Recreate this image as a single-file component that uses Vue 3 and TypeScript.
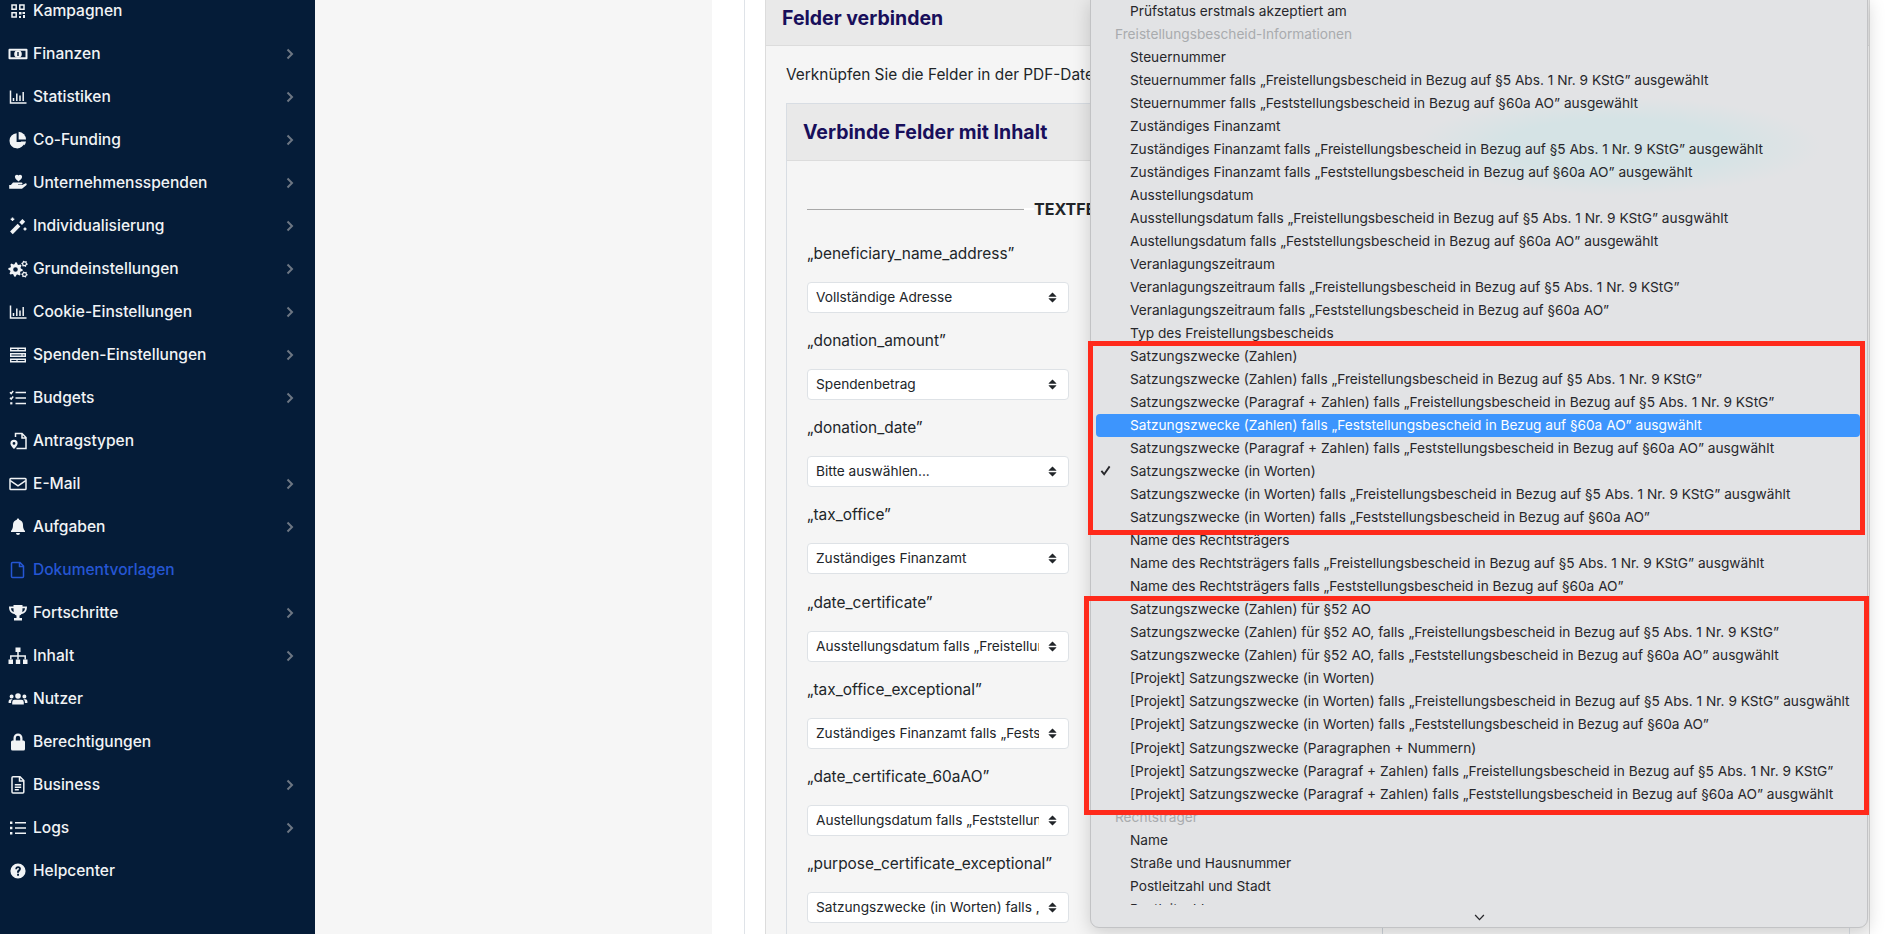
<script setup lang="ts">
type Part = [string, 'f' | 's' | 'd' | 'w'];
interface NavItem { label: string; icon: Part[]; chevron: boolean; active?: boolean }

function gear(cx: number, cy: number, r: number, teeth: number, hole: number): string {
  const pts: string[] = [];
  const n = teeth * 4;
  for (let i = 0; i < n; i++) {
    const a = (i / n) * Math.PI * 2;
    const rad = i % 4 < 2 ? r : r * 0.76;
    pts.push(`${(cx + rad * Math.cos(a)).toFixed(2)} ${(cy + rad * Math.sin(a)).toFixed(2)}`);
  }
  const h = `M${cx - hole} ${cy}a${hole} ${hole} 0 1 0 ${hole * 2} 0a${hole} ${hole} 0 1 0 ${-hole * 2} 0z`;
  return `M${pts.join('L')}z${h}`;
}

const chart: Part[] = [
  ['M2.5 3.5V16H18.5', 's'],
  ['M5.5 14v-3M8.8 14V6.5M12 14V8.5M15.2 14V5', 's'],
];

const nav: NavItem[] = [
  { label: 'Kampagnen', chevron: false, icon: [
    ['M4 4h4.2v4.2H4zM11.8 4H16v4.2h-4.2zM4 11.8h4.2V16H4z', 's'],
    ['M11 11h2.5v2.5H11zM14.5 11H17v2h-2.5zM11 15h2v2h-2zM15 14h2v3h-2z', 'f'],
  ] },
  { label: 'Finanzen', chevron: true, icon: [
    ['M.5 5.800a1 1 0 0 1 1-1h17a1 1 0 0 1 1 1v8.400a1 1 0 0 1-1 1h-17a1 1 0 0 1-1-1zM2.500 6.800v6.400h15V6.800z', 'f'],
    ['M10 6.200a3.800 3.800 0 1 0 0 7.600 3.800 3.800 0 0 0 0-7.600zM9.300 8h1.400v4H9.300z', 'f'],
  ] },
  { label: 'Statistiken', chevron: true, icon: chart },
  { label: 'Co-Funding', chevron: true, icon: [
    ['M8.600 3.200A7.600 7.600 0 1 0 16.600 12H8.600z', 'f'],
    ['M10.600 1.800A7.600 7.600 0 0 1 18 9.600h-7.400z', 'f'],
    ['M18 11.400h-5.400l3.600 3.800a7.500 7.500 0 0 0 1.800-3.800z', 'f'],
  ] },
  { label: 'Unternehmensspenden', chevron: true, icon: [
    ['M10.500 2.400c1-1.300 3.600-.9 3.600 1.400 0 1.900-2.400 3.700-3.600 4.600C9.300 7.500 6.900 5.700 6.900 3.800c0-2.300 2.600-2.700 3.600-1.400z', 'f'],
    ['M5 9.500h8.500c1.200 0 1.500 1.800.1 2H10v.6h4l3.300-1.700c1.200-.5 2.100 1 1 1.800L14 15.800H1.200v-3.900h1.700z', 'f'],
  ] },
  { label: 'Individualisierung', chevron: true, icon: [
    ['M3.400 16.800 11 9.200', 'w'],
    ['M12.600 7.600 15.800 4.400', 'w'],
    ['M4.500 1.500v3.600M2.700 3.300h3.600M17 11.500v3M15.500 13h3', 's'],
  ] },
  { label: 'Grundeinstellungen', chevron: true, icon: [
    [gear(7.500, 10.500, 7.200, 8, 2.300), 'f'],
    [gear(16.500, 4.800, 3.200, 6, 1.300), 'f'],
    [gear(16.500, 15.500, 3.200, 6, 1.300), 'f'],
  ] },
  { label: 'Cookie-Einstellungen', chevron: true, icon: chart },
  { label: 'Spenden-Einstellungen', chevron: true, icon: [
    ['M2 2.500h16v4H2zM2 8h16v4H2zM2 13.500h16v4H2z', 'f'],
    ['M3.400 3.900h6v1.200h-6zM10.600 3.900h6v1.200h-6zM3.400 9.400h10v1.200h-10zM14.600 9.400h2v1.200h-2zM3.400 14.900h5v1.200h-5zM9.600 14.900h7v1.200h-7z', 'd'],
  ] },
  { label: 'Budgets', chevron: true, icon: [
    ['M7.500 4.500h10.500M7.500 10h10.500M7.500 15.500h10.500', 's'],
    ['M2 4.200l1.200 1.300 2-2.500M2 9.700l1.200 1.300 2-2.500', 's'],
    ['M2.200 14.200h2.200v2.200H2.200z', 'f'],
  ] },
  { label: 'Antragstypen', chevron: false, icon: [
    ['M7.500 6V2.500H14l4 4v11H8.500M14 2.500V7h4', 's'],
    ['M6 8.800a3.600 3.600 0 0 0-3.600 3.600c0 1.800 2.400 4.600 3.600 5.600 1.200-1 3.600-3.800 3.600-5.600A3.600 3.600 0 0 0 6 8.800zM6 11a1.400 1.400 0 1 1 0 2.800A1.400 1.400 0 0 1 6 11z', 'f'],
  ] },
  { label: 'E-Mail', chevron: true, icon: [
    ['M2.800 4.500h14.400a.8.8 0 0 1 .8.8v9.400a.8.8 0 0 1-.8.8H2.800a.8.8 0 0 1-.8-.8V5.300a.8.8 0 0 1 .8-.8z', 's'],
    ['M2.300 6.600 10 11.800l7.700-5.200', 's'],
  ] },
  { label: 'Aufgaben', chevron: true, icon: [
    ['M10 1.500a1.200 1.200 0 0 0-1.200 1.300C6.500 3.400 5 5.300 5 7.800c0 3.800-1 4.800-2 6.200v1h14v-1c-1-1.400-2-2.400-2-6.200 0-2.500-1.500-4.400-3.800-5A1.200 1.200 0 0 0 10 1.500zM8 16h4a2 2 0 0 1-4 0z', 'f'],
  ] },
  { label: 'Dokumentvorlagen', chevron: false, active: true, icon: [
    ['M4.500 2.500h7.500l3.500 3.500v10.500a1 1 0 0 1-1 1h-10a1 1 0 0 1-1-1V3.500a1 1 0 0 1 1-1zM11.500 2.500V6.500h4', 's'],
  ] },
  { label: 'Fortschritte', chevron: true, icon: [
    ['M5.500 2h9v1.500H19c0 4.500-2 7-5.500 7.500-.5.700-1.200 1.200-2 1.500V15H14v2.500H6V15h2.500v-2.500c-.8-.3-1.500-.8-2-1.500C3 10.500 1 8 1 3.500h4.500zM3 5.200c.2 2 1.100 3.400 2.800 3.900-.2-1.100-.3-2.400-.3-3.900zM17 5.200h-2.500c0 1.500-.1 2.800-.3 3.900 1.700-.5 2.600-1.900 2.800-3.900z', 'f'],
  ] },
  { label: 'Inhalt', chevron: true, icon: [
    ['M7.500 1.500h5v4.500h-5zM.5 13.500h4.500V18H.5zM7.800 13.500h4.400V18H7.800zM15 13.500h4.500V18H15z', 'f'],
    ['M10 6v7.500M2.800 13.500V10h14.400v3.500', 's'],
  ] },
  { label: 'Nutzer', chevron: false, icon: [
    ['M10 4.200a2.800 2.800 0 1 1 0 5.600 2.800 2.800 0 0 1 0-5.600zM3.600 5.500a2 2 0 1 1 0 4 2 2 0 0 1 0-4zM16.400 5.500a2 2 0 1 1 0 4 2 2 0 0 1 0-4z', 'f'],
    ['M6.600 10.800h6.800a2.400 2.400 0 0 1 2.400 2.400V15.500H4.200v-2.300a2.400 2.400 0 0 1 2.400-2.400zM.6 14v-1.700a2 2 0 0 1 2-2h2a3.500 3.500 0 0 0-1.500 3.700zM19.400 14v-1.700a2 2 0 0 0-2-2h-2a3.500 3.500 0 0 1 1.500 3.700z', 'f'],
  ] },
  { label: 'Berechtigungen', chevron: false, icon: [
    ['M10 1.500A4.500 4.500 0 0 0 5.500 6v2.500H4.500A1.500 1.500 0 0 0 3 10v7a1.500 1.500 0 0 0 1.500 1.500h11A1.500 1.500 0 0 0 17 17v-7a1.500 1.500 0 0 0-1.500-1.500h-1V6A4.500 4.500 0 0 0 10 1.500zM7.800 8.500V6a2.200 2.200 0 0 1 4.400 0v2.500z', 'f'],
  ] },
  { label: 'Business', chevron: true, icon: [
    ['M5 1.700h7l3.800 3.800V17a1 1 0 0 1-1 1H5a1 1 0 0 1-1-1V2.700a1 1 0 0 1 1-1zM11.500 1.700v4.300h4.300', 's'],
    ['M6.800 9.800h6.400M6.800 12.300h6.400M6.800 14.800h4', 's'],
  ] },
  { label: 'Logs', chevron: true, icon: [
    ['M2 3.500h2.400v2.400H2zM2 8.800h2.400v2.400H2zM2 14.100h2.400v2.400H2z', 'f'],
    ['M7 4.700h11M7 10h11M7 15.300h11', 's'],
  ] },
  { label: 'Helpcenter', chevron: false, icon: [
    ['M10 2.400a7.600 7.600 0 1 1 0 15.200 7.600 7.600 0 0 1 0-15.200zM9.100 12.800v1.900h1.900v-1.900zM7.300 8.300h1.800c0-.9.400-1.300 1-1.300.6 0 .9.400.9.800 0 1-2 1.300-2 3.300V11.700h1.900c0-1.400 2-1.700 2-3.900 0-1.500-1.200-2.500-2.800-2.500-1.700 0-2.800 1.100-2.800 3z', 'f'],
  ] },
];

const fields = [
  { name: '„beneficiary_name_address”', value: 'Vollständige Adresse' },
  { name: '„donation_amount”', value: 'Spendenbetrag' },
  { name: '„donation_date”', value: 'Bitte auswählen...' },
  { name: '„tax_office”', value: 'Zuständiges Finanzamt' },
  { name: '„date_certificate”', value: 'Ausstellungsdatum falls „Freistellungsbescheid in Bezug' },
  { name: '„tax_office_exceptional”', value: 'Zuständiges Finanzamt falls „Feststellungsbescheid' },
  { name: '„date_certificate_60aAO”', value: 'Austellungsdatum falls „Feststellungsbescheid in Bezug' },
  { name: '„purpose_certificate_exceptional”', value: 'Satzungszwecke (in Worten) falls „Freistellungsbescheid' },
];

const F = ' falls „Freistellungsbescheid in Bezug auf §5 Abs. 1 Nr. 9 KStG”';
const S = ' falls „Feststellungsbescheid in Bezug auf §60a AO”';
const A = ' ausgewählt';
const T = ' ausgwählt';
const Z = 'Satzungszwecke (Zahlen)';
const P = 'Satzungszwecke (Paragraf + Zahlen)';
const W = 'Satzungszwecke (in Worten)';
const Q = 'Satzungszwecke (Zahlen) für §52 AO';
const PW = '[Projekt] Satzungszwecke (in Worten)';
const PP = '[Projekt] Satzungszwecke (Paragraf + Zahlen)';

const options: { text: string; kind?: 'group' | 'active' | 'checked' }[] = [
  { text: 'Prüfstatus erstmals akzeptiert am' },
  { text: 'Freistellungsbescheid-Informationen', kind: 'group' },
  { text: 'Steuernummer' },
  { text: 'Steuernummer' + F + A },
  { text: 'Steuernummer' + S + A },
  { text: 'Zuständiges Finanzamt' },
  { text: 'Zuständiges Finanzamt' + F + A },
  { text: 'Zuständiges Finanzamt' + S + A },
  { text: 'Ausstellungsdatum' },
  { text: 'Ausstellungsdatum' + F + T },
  { text: 'Austellungsdatum' + S + A },
  { text: 'Veranlagungszeitraum' },
  { text: 'Veranlagungszeitraum' + F },
  { text: 'Veranlagungszeitraum' + S },
  { text: 'Typ des Freistellungsbescheids' },
  { text: Z },
  { text: Z + F },
  { text: P + F },
  { text: Z + S + T, kind: 'active' },
  { text: P + S + T },
  { text: W, kind: 'checked' },
  { text: W + F + T },
  { text: W + S },
  { text: 'Name des Rechtsträgers' },
  { text: 'Name des Rechtsträgers' + F + T },
  { text: 'Name des Rechtsträgers' + S },
  { text: Q },
  { text: Q + ',' + F },
  { text: Q + ',' + S + T },
  { text: PW },
  { text: PW + F + T },
  { text: PW + S },
  { text: '[Projekt] Satzungszwecke (Paragraphen + Nummern)' },
  { text: PP + F },
  { text: PP + S + T },
  { text: 'Rechtsträger', kind: 'group' },
  { text: 'Name' },
  { text: 'Straße und Hausnummer' },
  { text: 'Postleitzahl und Stadt' },
  { text: 'Postleitzahl' },
];
</script>

<template>
  <div class="page">
    <aside class="sidebar">
      <a
        v-for="item in nav"
        :key="item.label"
        class="nav-row"
        :class="{ active: item.active }"
      >
        <svg class="nav-icon" viewBox="0 0 20 20" width="20" height="20" aria-hidden="true">
          <path
            v-for="(part, i) in item.icon"
            :key="i"
            :d="part[0]"
            :class="'p-' + part[1]"
            fill-rule="evenodd"
          />
        </svg>
        <span class="nav-label">{{ item.label }}</span>
        <svg v-if="item.chevron" class="nav-chevron" viewBox="0 0 8 12" width="8" height="12" aria-hidden="true">
          <path d="M1.500 1.500 6 6l-4.500 4.500" />
        </svg>
      </a>
    </aside>

    <div class="gutter"></div>

    <main class="content">
      <div class="content-inner">
        <section class="panel">
          <header class="panel-head">Felder verbinden</header>
          <div class="panel-body">
            <p class="intro">Verknüpfen Sie die Felder in der PDF-Datei mit den passenden Inhalten.</p>
            <section class="card">
              <header class="card-head">Verbinde Felder mit Inhalt</header>
              <div class="card-body">
                <div class="col-left">
                  <div class="divider">
                    <span class="rule"></span>
                    <span class="rule-gap"></span>
                    <strong class="divider-text">TEXTFELDER</strong>
                  </div>
                  <div v-for="f in fields" :key="f.name" class="field">
                    <label class="field-label">{{ f.name }}</label>
                    <div class="select">
                      <span class="select-text">{{ f.value }}</span>
                      <svg class="select-arrow" viewBox="0 0 9 11" width="9" height="11" aria-hidden="true">
                        <path d="M4.500.4 8.300 4.300a.3.3 0 0 1-.2.5H.9a.3.3 0 0 1-.2-.5zM4.500 10.600.7 6.700a.3.3 0 0 1 .2-.5h7.200a.3.3 0 0 1 .2.5z" />
                      </svg>
                    </div>
                  </div>
                </div>
                <div class="col-right"></div>
              </div>
            </section>
          </div>
        </section>
      </div>
    </main>

    <div class="menu">
      <div class="glow"></div>
      <ul class="menu-list">
        <li
          v-for="(o, i) in options"
          :key="i"
          class="menu-row"
          :class="o.kind"
        >
          <svg v-if="o.kind === 'checked'" class="tick" viewBox="0 0 12 12" width="11" height="11" aria-hidden="true">
            <path d="M1.500 6.500 4.500 10l6-8.500" />
          </svg>
          {{ o.text }}
        </li>
      </ul>
      <div class="menu-foot">
        <svg viewBox="0 0 12 8" width="11" height="7" aria-hidden="true">
          <path d="M1 1.200 6 6.400l5-5.200" />
        </svg>
      </div>
    </div>

    <div class="mark mark-one"></div>
    <div class="mark mark-two"></div>
  </div>
</template>

<style scoped>
.page {
  position: relative;
  display: flex;
  width: 1898px;
  height: 934px;
  overflow: hidden;
  background: #fff;
  font-family: Inter, "Liberation Sans", sans-serif;
  color: #212529;
}
.sidebar {
  flex: 0 0 315px;
  background: #051c38;
  margin-top: -11px;
  height: 945px;
  box-sizing: border-box;
}
.nav-row {
  display: flex;
  align-items: center;
  height: 43px;
  padding-left: 8px;
  color: #f1f3f5;
  position: relative;
  font-size: 15.550px;
  font-weight: 500;
}
.nav-row.active { color: #2556d3; }
.nav-icon { flex: none; overflow: visible; }
.nav-label { margin-left: 5px; white-space: nowrap; }
.nav-chevron {
  margin-left: auto;
  margin-right: 21px;
  fill: none;
  stroke: #6d7683;
  stroke-width: 2;
}
.p-f { fill: currentColor; }
.p-d { fill: #051c38; }
.p-s { fill: none; stroke: currentColor; stroke-width: 1.500; }
.p-w { fill: none; stroke: currentColor; stroke-width: 3.800; }

.gutter { flex: 0 0 397px; background: #f6f6f6; }
.content { flex: 1; min-width: 0; padding-left: 32px; }
.content-inner {
  height: 100%;
  border-left: 1px solid #dfe3e8;
  padding-left: 20px;
}
.panel {
  width: 1105px;
  height: 100%;
  box-sizing: border-box;
  background: #f5f5f5;
  border-left: 1px solid #dcdcdc;
  border-right: 1px solid #d8d8d8;
}
.panel-head {
  height: 46px;
  box-sizing: border-box;
  padding-left: 16px;
  background: #e9e9e9;
  border-bottom: 1px solid #dcdcdc;
  color: #180f5b;
  font-size: 19.500px;
  font-weight: 700;
  line-height: 36px;
}
.panel-body { padding: 17px 19px 0 20px; }
.intro { margin: 0 0 16px; font-size: 15.400px; line-height: 24px; white-space: nowrap; }
.card {
  height: 900px;
  box-sizing: border-box;
  border: 1px solid #d8dde3;
  background: #f5f5f5;
}
.card-head {
  height: 57px;
  box-sizing: border-box;
  padding-left: 16px;
  background: #e9e9e9;
  border-bottom: 1px solid #dcdcdc;
  color: #180f5b;
  font-size: 19.500px;
  font-weight: 700;
  line-height: 57px;
}
.card-body { display: flex; }
.col-left { flex: 0 0 595px; box-sizing: border-box; padding: 35px 0 0 20px; }
.col-right { flex: 1; height: 900px; border-left: 1px solid #ccd2d8; }
.divider {
  display: flex;
  align-items: center;
  height: 26px;
  margin-bottom: 20px;
  font-size: 16px;
  white-space: nowrap;
}
.rule { width: 217px; height: 1px; background: #a8a8a8; }
.rule-gap { width: 10px; height: 2px; background: #fff; }
.divider-text { font-weight: 700; }
.field { width: 262px; margin-bottom: 16.150px; }
.field-label {
  display: block;
  margin-bottom: 16px;
  font-size: 15.450px;
  line-height: 24px;
  white-space: nowrap;
}
.select {
  position: relative;
  height: 31px;
  box-sizing: border-box;
  border: 1px solid #dee2e6;
  border-radius: 4px;
  background: #fff;
  padding-left: 8px;
  font-size: 13.700px;
  line-height: 29px;
}
.select-text {
  display: block;
  width: 223px;
  overflow: hidden;
  white-space: nowrap;
}
.select-arrow {
  position: absolute;
  right: 11px;
  top: 9px;
  fill: #212529;
}

.menu {
  position: absolute;
  left: 1090px;
  top: -1px;
  width: 778px;
  height: 929px;
  box-sizing: border-box;
  background: #e2e3e5;
  border: 1px solid #c2c3c5;
  border-radius: 0 0 9px 9px;
  box-shadow: 0 4px 18px rgba(0, 0, 0, 0.17);
  color: #27272b;
  font-size: 13.700px;
}
.glow {
  position: absolute;
  left: 322px;
  top: 97px;
  width: 408px;
  height: 98px;
  border-radius: 50%;
  background: radial-gradient(closest-side, #d5e3e5 55%, rgba(213, 227, 229, 0) 100%);
}
.menu-list {
  position: relative;
  list-style: none;
  margin: 0;
  padding: 0;
  height: 905px;
  overflow: hidden;
}
.menu-row {
  position: relative;
  height: 23.020px;
  line-height: 23px;
  margin: 0 7px 0 5px;
  padding-left: 34px;
  white-space: nowrap;
  border-radius: 4px;
}
.menu-row.group { padding-left: 19px; color: #a9abae; }
.menu-row.active { background: #3d95fd; color: #fff; }
.tick {
  position: absolute;
  left: 4px;
  top: 5px;
  fill: none;
  stroke: #27272b;
  stroke-width: 2;
}
.menu-foot {
  display: flex;
  justify-content: center;
  padding-top: 9px;
}
.menu-foot svg {
  fill: none;
  stroke: #27272b;
  stroke-width: 1.500;
}

.mark {
  position: absolute;
  box-sizing: border-box;
  border: 5px solid #ff2a1b;
  pointer-events: none;
}
.mark-one { left: 1088px; top: 341px; width: 777px; height: 194px; }
.mark-two { left: 1084px; top: 596px; width: 785px; height: 219px; }
</style>

<style>
html, body { margin: 0; padding: 0; overflow: hidden; background: #fff; }
</style>
